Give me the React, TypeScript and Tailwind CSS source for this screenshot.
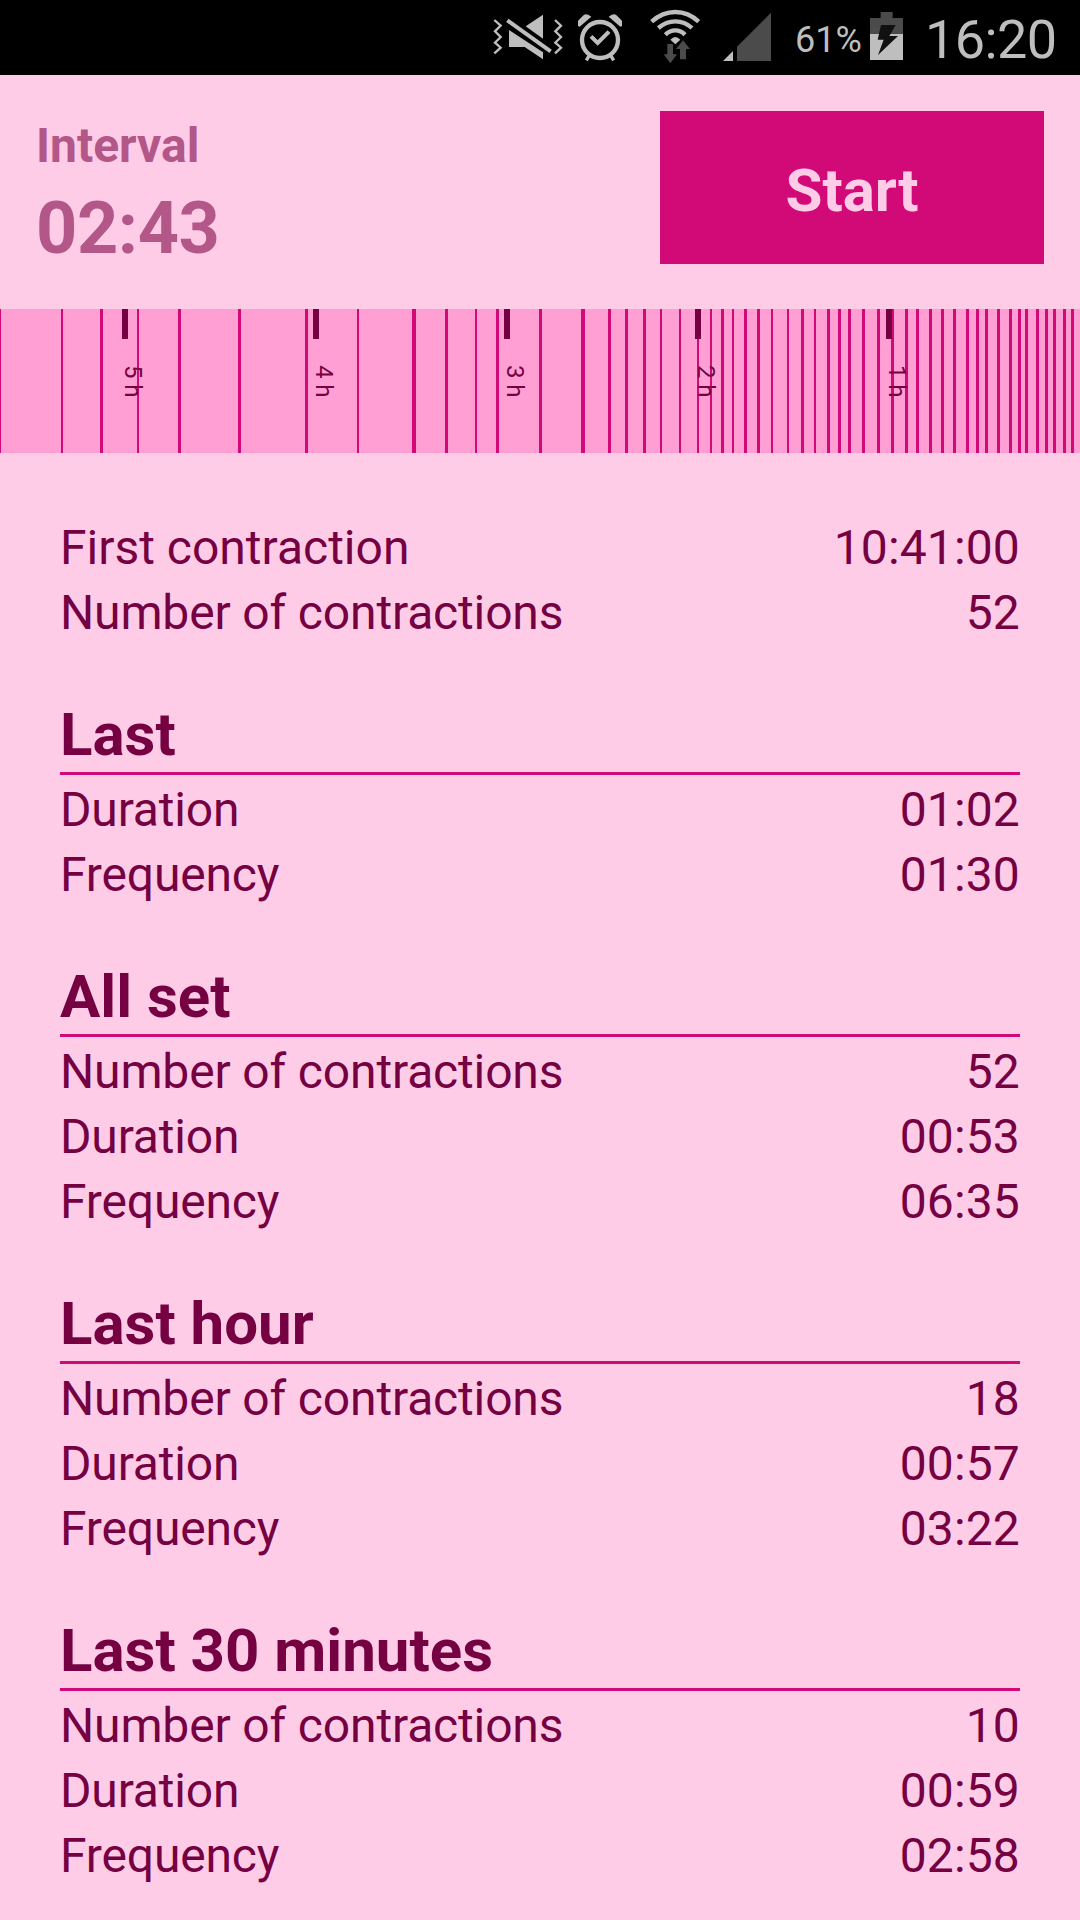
import React from "react";

// [x, width] of every contraction on the timeline, oldest first
const contractions = [
  [0, 1], [61, 2], [100, 3], [137, 2], [178, 3], [238, 3], [305, 3], [357, 2],
  [412, 4], [445, 3], [475, 2], [496, 3], [539, 3], [581, 4], [608, 3], [625, 3],
  [643, 3], [660, 2], [679, 2], [697, 2], [710, 2], [721, 3], [732, 2], [744, 3],
  [757, 3], [771, 2], [787, 2], [801, 3], [814, 2], [827, 3], [838, 3], [848, 3],
  [862, 3], [877, 3], [891, 3], [905, 3], [916, 3], [929, 3], [941, 3], [953, 3],
  [966, 3], [976, 3], [985, 3], [997, 3], [1009, 3], [1018, 3], [1025, 3],
  [1036, 3], [1045, 3], [1053, 3], [1063, 3], [1071, 3],
];

const hours = [
  { x: 122, label: "5 h" },
  { x: 313, label: "4 h" },
  { x: 504, label: "3 h" },
  { x: 695, label: "2 h" },
  { x: 886, label: "1 h" },
];

const sections = [
  {
    title: "Last",
    rows: [
      ["Duration", "01:02"],
      ["Frequency", "01:30"],
    ],
  },
  {
    title: "All set",
    rows: [
      ["Number of contractions", "52"],
      ["Duration", "00:53"],
      ["Frequency", "06:35"],
    ],
  },
  {
    title: "Last hour",
    rows: [
      ["Number of contractions", "18"],
      ["Duration", "00:57"],
      ["Frequency", "03:22"],
    ],
  },
  {
    title: "Last 30 minutes",
    rows: [
      ["Number of contractions", "10"],
      ["Duration", "00:59"],
      ["Frequency", "02:58"],
    ],
  },
];

function StatusBar() {
  return (
    <div className="flex h-[75px] items-start bg-black pl-[492px] text-[#bebebe]">
      {/* Muted + vibrate */}
      <svg className="mt-3 h-[50px] w-[72px] shrink-0" viewBox="36 36 216 150" fill="currentColor">
        <path d="M137 79 L189 44 V116 Z" />
        <path d="M87 90 L189 157 V178 L134 141 H87 Z" />
        <path d="M82 61 L212 154" stroke="currentColor" strokeWidth="12" />
        <path d="M43 60 L62 77 L45 94 L62 111 L45 128 L62 143 L43 160" fill="none" stroke="currentColor" strokeWidth="7" />
        <path d="M225 60 L243 77 L226 94 L243 111 L226 128 L243 143 L225 160" fill="none" stroke="currentColor" strokeWidth="7" />
      </svg>

      {/* Alarm */}
      <svg className="mt-3 ml-[13px] h-[50px] w-[46px] shrink-0" viewBox="291 36 138 150" fill="none" stroke="currentColor">
        <circle cx="360" cy="120" r="54" strokeWidth="13" />
        <path d="M333 109 L353 129 L387 95" strokeWidth="12" />
        <path d="M328 166 L319 181 M392 166 L401 181" strokeWidth="10" />
        <path d="M294 78 V62 L312 44 Q322 39 334 50 L299 80 Z" fill="currentColor" stroke="none" />
        <path d="M426 78 V62 L408 44 Q398 39 386 50 L421 80 Z" fill="currentColor" stroke="none" />
      </svg>

      {/* Wifi */}
      <svg className="mt-2 ml-[26px] h-[56px] w-[52px] shrink-0" viewBox="507 24 156 168" fill="none" stroke="currentColor">
        <path d="M515 65 Q547 36 586 36 Q625 36 656 65" strokeWidth="13" />
        <path d="M535 84 Q558 64 586 64 Q614 64 636 84" strokeWidth="13" />
        <path d="M556 104 Q569 91 586 91 Q603 91 615 104" strokeWidth="13" />
        <path d="M571 119 Q586 103 601 119 L586 133 Z" fill="currentColor" stroke="none" />
        <path d="M562 132 H579 V163 H591 L571 190 L551 163 H562 Z" fill="#4b4b4b" stroke="none" />
        <path d="M600 178 V147 H588 L609 121 L630 147 H618 V178 Z" fill="#4b4b4b" stroke="none" />
      </svg>

      {/* Signal */}
      <svg className="mt-3 ml-[21px] h-[50px] w-[50px] shrink-0" viewBox="726 36 150 150">
        <path d="M873 38 V183 H771 V140 Z" fill="#4b4b4b" />
        <path d="M759 153 V183 H729 Z" fill="currentColor" />
      </svg>

      <span className="mt-[19px] ml-[23px] w-[74px] text-[36px] leading-[42px] font-[385]">61%</span>

      {/* Battery */}
      <svg className="mt-3 h-[50px] w-[35px] shrink-0" viewBox="267 36 105 150">
        <path d="M302 36 H338 V54 H369 V102 H270 V54 H302 Z" fill="#4b4b4b" />
        <path d="M270 102 H369 V180 H270 Z" fill="currentColor" />
        <path d="M303 75 H347 L328 108 H354 L294 165 L311 119 H293 Z" fill="#111111" />
      </svg>

      <span className="mt-[9px] ml-[21px] text-[54px] leading-[62px] font-[385] tracking-[-0.6px]">16:20</span>
    </div>
  );
}

function Timeline() {
  return (
    <svg className="block h-36 w-full bg-[#ff9fd3]" viewBox="0 0 1080 144">
      {contractions.map(([x, width]) => (
        <rect key={x} x={x} y="0" width={width} height="144" fill="#d10a78" />
      ))}
      {hours.map(({ x, label }) => (
        <g key={label} fill="#750042">
          <rect x={x} y="0" width="6" height="30" />
          <text transform={`translate(${x + 2.5} 56) rotate(90)`} fontSize="24" letterSpacing="-0.1">
            {label}
          </text>
        </g>
      ))}
    </svg>
  );
}

function Row({ label, value }: { label: string; value: string }) {
  return (
    <div className="flex justify-between text-5xl leading-[65px]">
      <span>{label}</span>
      <span className="tracking-[0.15px]">{value}</span>
    </div>
  );
}

export default function App() {
  return (
    <div className="h-[1920px] w-[1080px] overflow-hidden bg-[#ffcce8] font-['Roboto',sans-serif] text-[#750042]">
      <StatusBar />

      <header className="flex h-[234px] items-start justify-between px-9 pt-9 font-bold">
        <div className="pt-[7px] text-[#b25787]">
          <div className="text-5xl leading-[56px]">Interval</div>
          <div className="mt-[13px] text-7xl leading-[84px] tracking-[-0.4px]">02:43</div>
        </div>
        <button className="flex h-[153px] w-96 justify-center bg-[#d10a78] pt-[45px] text-6xl leading-[70px] text-[#ffcce8]">
          Start
        </button>
      </header>

      <Timeline />

      <main className="px-15 pt-[62px]">
        <Row label="First contraction" value="10:41:00" />
        <div className="tracking-[-0.15px]">
          <Row label="Number of contractions" value="52" />
          {sections.map((section) => (
            <section key={section.title}>
              <h2 className="mb-0.5 border-b-3 border-[#d10a78] pt-[55px] pb-[2px] text-6xl leading-[70px] font-bold tracking-normal">
                {section.title}
              </h2>
              {section.rows.map(([label, value]) => (
                <Row key={label} label={label} value={value} />
              ))}
            </section>
          ))}
        </div>
      </main>
    </div>
  );
}
